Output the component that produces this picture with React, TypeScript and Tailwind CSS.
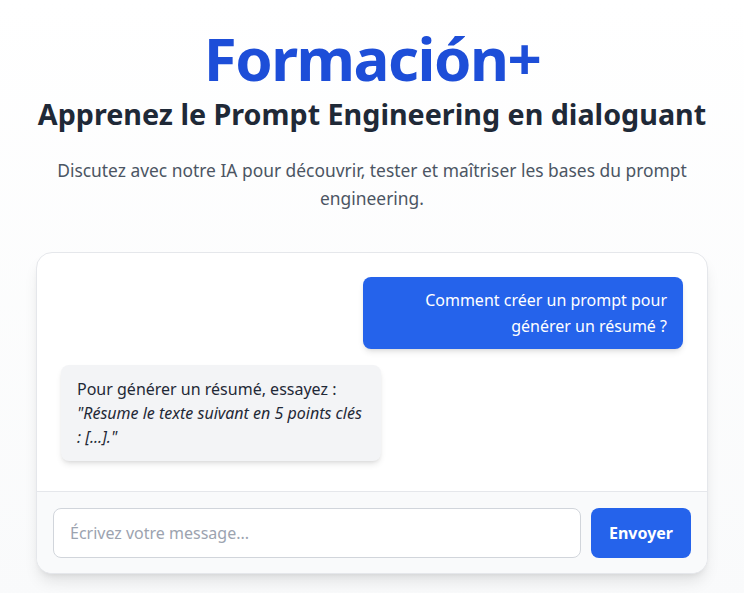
import { useState } from "react";

type Message = { from: "user" | "bot"; text: React.ReactNode };

const initialMessages: Message[] = [
  { from: "user", text: "Comment créer un prompt pour générer un résumé ?" },
  {
    from: "bot",
    text: (
      <>
        Pour générer un résumé, essayez :
        <br />
        <em>"Résume le texte suivant en 5 points clés : [...]."</em>
      </>
    ),
  },
];

export default function App() {
  const [messages] = useState<Message[]>(initialMessages);
  const [draft, setDraft] = useState("");

  return (
    <div className="min-h-screen bg-linear-to-b from-white to-[#f9fafb] font-['Noto_Sans',sans-serif] px-9 pt-[28px] pb-8">
      {/* Header */}
      <div className="text-center">
        <h1 className="text-[60px] leading-none font-bold text-[#1d4ed8] tracking-tight">Formación+</h1>
        <h2 className="mt-[8px] text-[28.7px] leading-9 font-bold text-[#1f2937]">
          Apprenez le Prompt Engineering en dialoguant
        </h2>
        <p className="mx-auto mt-[24px] max-w-[650px] text-[17.4px] leading-7 text-[#4b5563]">
          Discutez avec notre IA pour découvrir, tester et maîtriser les bases du prompt engineering.
        </p>
      </div>

      {/* Chat card */}
      <div className="mx-auto mt-10 max-w-[672px] rounded-2xl border border-[#e5e7eb] bg-white shadow-lg overflow-hidden">
        <div className="flex flex-col gap-4 p-6 h-[238px]">
          {messages.map((m, i) =>
            m.from === "user" ? (
              <div key={i} className="flex justify-end">
                <div className="max-w-xs rounded-lg bg-[#2563eb] px-4 py-2.5 text-right text-base leading-[26px] text-white shadow-md">
                  {m.text}
                </div>
              </div>
            ) : (
              <div key={i} className="flex justify-start">
                <div className="max-w-xs rounded-lg bg-[#f3f4f6] px-4 py-3 text-base leading-6 text-[#1f2937] shadow-md">
                  {m.text}
                </div>
              </div>
            )
          )}
        </div>

        {/* Input */}
        <div className="flex gap-2.5 border-t border-[#e5e7eb] bg-[#f9fafb] px-4 pt-4 pb-[15px]">
          <input
            value={draft}
            onChange={(e) => setDraft(e.target.value)}
            placeholder="Écrivez votre message..."
            className="flex-1 rounded-lg border border-[#d1d5db] bg-white px-4 py-3 text-base leading-6 text-[#1f2937] placeholder:text-[#9ca3af] outline-none"
          />
          <button className="w-[100px] rounded-lg bg-[#2563eb] text-base font-bold text-white">Envoyer</button>
        </div>
      </div>
    </div>
  );
}
